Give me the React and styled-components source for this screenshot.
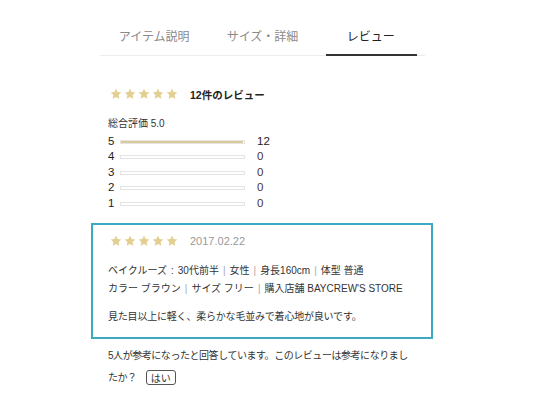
import React, { useState } from 'react';
import styled, { createGlobalStyle } from 'styled-components';

const GlobalStyle = createGlobalStyle`
    body {
        margin: 0;
        background: #fff;
        font-family: "Liberation Sans", "Noto Sans CJK JP", sans-serif;
        color: #333;
    }
`;

const tabs = ['アイテム説明', 'サイズ・詳細', 'レビュー'];

const ratings = [
    { score: 5, count: 12 },
    { score: 4, count: 0 },
    { score: 3, count: 0 },
    { score: 2, count: 0 },
    { score: 1, count: 0 },
];

const total = 12;

// 별 아이콘
const Star = () => (
    <svg width="12" height="12" viewBox="0 0 24 24">
        <path
            d="M12 1.2l3.2 6.9 7.5.9-5.5 5.2 1.5 7.4L12 18l-6.7 3.6 1.5-7.4L1.3 9l7.5-.9z"
            fill="#e2cf91"
        />
    </svg>
);

const Stars = () => (
    <StarRow>
        {[0, 1, 2, 3, 4].map((i) => (
            <Star key={i} />
        ))}
    </StarRow>
);

const App = () => {
    const [activeTab, setActiveTab] = useState(2);  // 현재 탭

    return (
        <>
            <GlobalStyle />
            <Page>
                <TabBar>
                    {tabs.map((t, i) => (
                        <Tab key={t} active={i === activeTab} onClick={() => setActiveTab(i)}>
                            {t}
                        </Tab>
                    ))}
                </TabBar>

                <Content>
                    <SummaryRow>
                        <Stars />
                        <SummaryTitle>12件のレビュー</SummaryTitle>
                    </SummaryRow>

                    <OverallLabel>総合評価 5.0</OverallLabel>

                    <BarList>
                        {ratings.map((r) => (
                            <BarRow key={r.score}>
                                <BarLabel>{r.score}</BarLabel>
                                <BarTrack>
                                    <BarFill style={{ width: `${(r.count / total) * 100}%` }} />
                                </BarTrack>
                                <BarCount zero={r.count === 0}>{r.count}</BarCount>
                            </BarRow>
                        ))}
                    </BarList>

                    <ReviewCard>
                        <CardHead>
                            <Stars />
                            <ReviewDate>2017.02.22</ReviewDate>
                        </CardHead>
                        <MetaBlock>
                            <MetaLine>
                                ベイクルーズ<Colon>:</Colon>30代前半<Sep>|</Sep>女性<Sep>|</Sep>身長160cm<Sep>|</Sep>体型 普通
                            </MetaLine>
                            <MetaLine>
                                カラー ブラウン<Sep>|</Sep>サイズ フリー<Sep>|</Sep>購入店舗 BAYCREW'S STORE
                            </MetaLine>
                        </MetaBlock>
                        <Comment>見た目以上に軽く、柔らかな毛並みで着心地が良いです。</Comment>
                    </ReviewCard>

                    <Helpful>
                        5人が参考になったと回答しています。このレビューは参考になりましたか？
                        <YesButton>はい</YesButton>
                    </Helpful>
                </Content>
            </Page>
        </>
    );
};

const Page = styled.div`
    width: 325px;
    margin-left: 100px;
    padding-top: 20px;
`;

const TabBar = styled.div`
    display: flex;
    border-bottom: 1px solid #ececec;
`;

const Tab = styled.div`
    position: relative;
    flex: 1;
    height: 35px;
    padding-bottom: 5px;
    box-sizing: border-box;
    display: flex;
    align-items: center;
    justify-content: center;
    font-family: "Noto Sans CJK JP", sans-serif;
    font-size: 12px;
    color: ${(p) => (p.active ? '#222' : '#8a8a8a')};
    cursor: pointer;

    &::after {
        content: '';
        display: ${(p) => (p.active ? 'block' : 'none')};
        position: absolute;
        left: 9px;
        right: 8px;
        bottom: -1px;
        height: 2px;
        background: #333;
    }
`;

const Content = styled.div`
    padding: 0 8px;
`;

const StarRow = styled.div`
    display: flex;
    gap: 2px;
    padding-left: 2px;
`;

const SummaryRow = styled.div`
    display: flex;
    align-items: center;
    height: 16px;
    margin-top: 30px;
`;

const CardHead = styled(SummaryRow)`
    margin-top: 0;
`;

const SummaryTitle = styled.div`
    margin-left: 12px;
    font-size: 10.5px;
    font-weight: bold;
    color: #222;
`;

const OverallLabel = styled.div`
    margin-top: 15px;
    height: 14px;
    line-height: 14px;
    font-size: 10px;
    color: #333;
`;

const BarList = styled.div`
    margin-top: 2px;
`;

const BarRow = styled.div`
    display: flex;
    align-items: center;
    height: 15.5px;
`;

const BarLabel = styled.div`
    width: 12px;
    font-size: 11.5px;
    color: #222;
`;

const BarTrack = styled.div`
    width: 125px;
    height: 4px;
    margin-top: 2px;
    box-sizing: border-box;
    border: 1px solid #e4e4e4;
    background: #fff;
    overflow: hidden;
`;

const BarFill = styled.div`
    margin: -1px;
    height: 4px;
    background: #dacb9b;
`;

const BarCount = styled.div`
    margin-left: 12px;
    font-size: 11.5px;
    color: ${(p) => (p.zero ? '#4a3434' : '#222')};
`;

const ReviewCard = styled.div`
    margin: 12px -16px 0 -17px;
    border: 2px solid #3ba9c0;
    padding: 8px 15px 11px 15px;
`;

const ReviewDate = styled.div`
    margin-left: 12px;
    font-size: 11px;
    color: #999;
`;

const MetaBlock = styled.div`
    margin-top: 13px;
`;

const MetaLine = styled.div`
    font-size: 10px;
    line-height: 18px;
    color: #333;
    white-space: nowrap;
`;

const Sep = styled.span`
    color: #aaa;
    margin: 0 4px;
`;

const Colon = styled.span`
    margin: 0 4px;
`;

const Comment = styled.div`
    margin-top: 10px;
    font-size: 10px;
    line-height: 18px;
    letter-spacing: -0.2px;
    color: #333;
`;

const Helpful = styled.div`
    margin-top: 6px;
    padding-right: 3px;
    font-size: 10px;
    line-height: 22px;
    letter-spacing: -0.45px;
    color: #333;
`;

const YesButton = styled.button`
    margin-left: 9px;
    height: 15px;
    padding: 0 4px;
    font-family: "Noto Sans CJK JP", sans-serif;
    font-size: 10px;
    line-height: 12px;
    letter-spacing: 0;
    color: #333;
    background: #fff;
    border: 1px solid #555;
    border-radius: 3px;
    vertical-align: middle;
    cursor: pointer;
`;

export default App;
